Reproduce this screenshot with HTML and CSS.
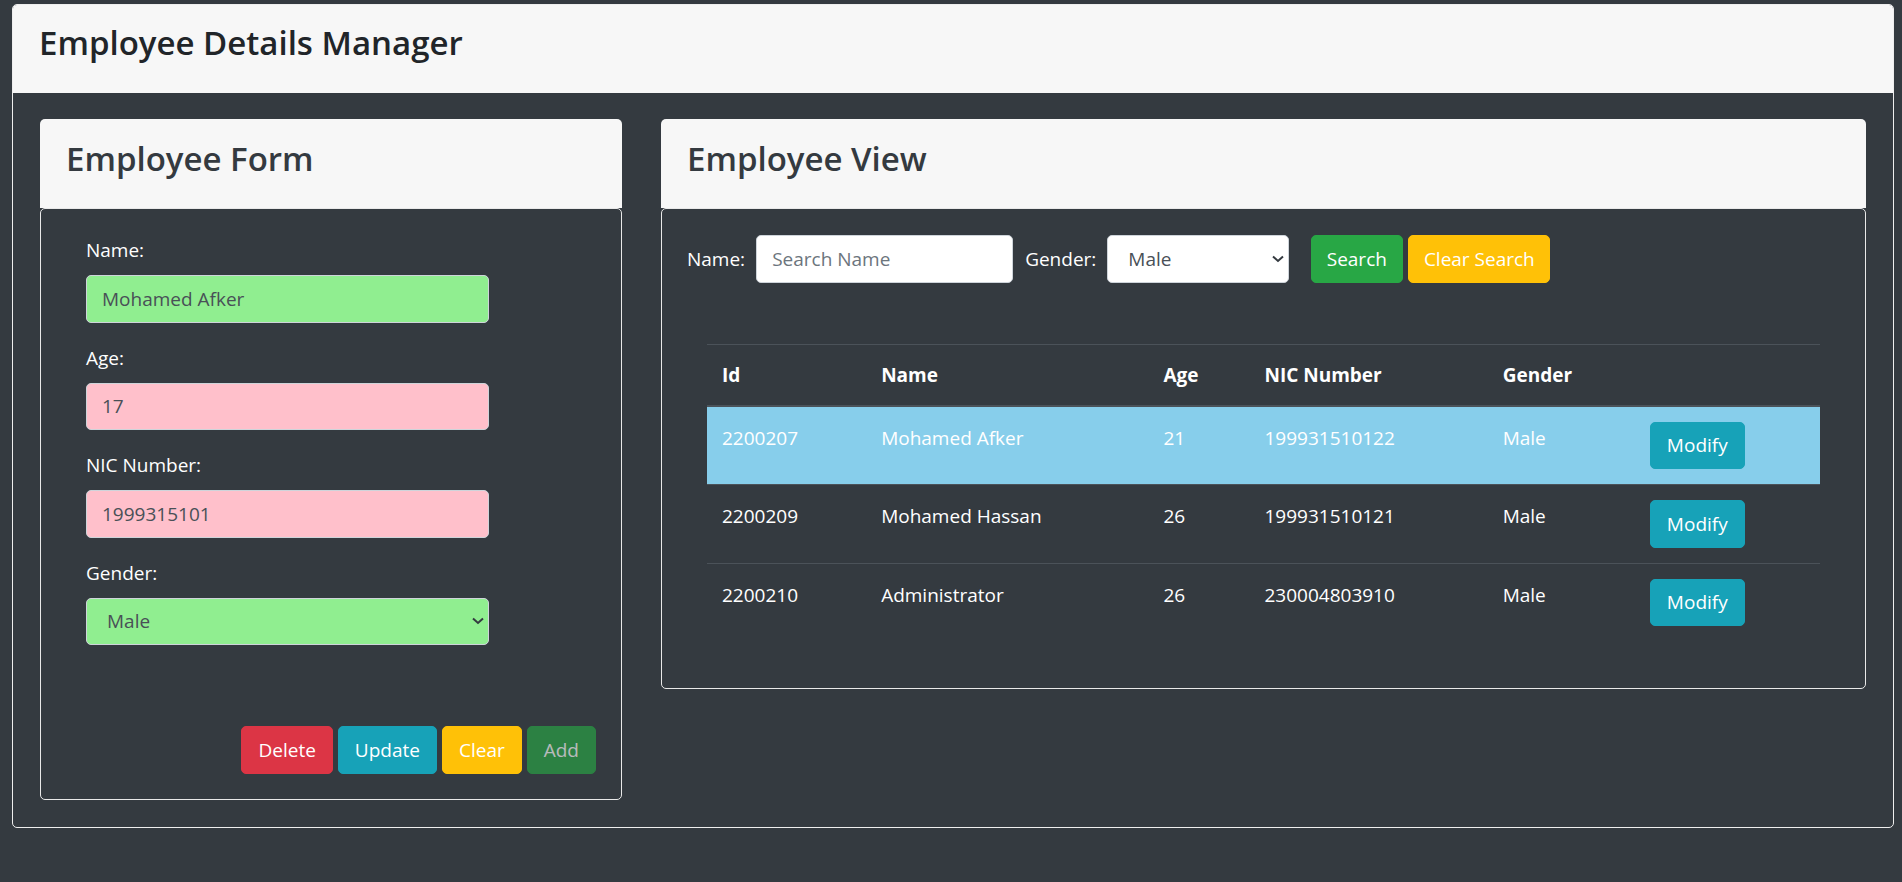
FILE: index.html
```html
<!DOCTYPE html>
<html lang="en">
<head>
<meta charset="utf-8">
<title>Employee Details Manager</title>
<link rel="stylesheet" href="styles.css">
</head>
<body>
<div class="shell">
  <header class="shell-header">
    <h1 class="shell-title">Employee Details Manager</h1>
  </header>
  <div class="shell-body">
    <section class="card">
      <div class="card-header"><h2 class="card-title">Employee Form</h2></div>
      <div class="card-body">
        <form class="emp-form">
          <div class="field">
            <label class="field-label">Name:</label>
            <input class="input input-ok" type="text" value="Mohamed Afker">
          </div>
          <div class="field">
            <label class="field-label">Age:</label>
            <input class="input input-bad" type="text" value="17">
          </div>
          <div class="field">
            <label class="field-label">NIC Number:</label>
            <input class="input input-bad" type="text" value="1999315101">
          </div>
          <div class="field">
            <label class="field-label">Gender:</label>
            <div class="select-wrap">
              <select class="input select input-ok"><option>Male</option><option>Female</option></select>
              <svg class="chev" width="12" height="8" viewBox="0 0 12 8"><path d="M1 1.5 L6 6 L11 1.5" fill="none" stroke="#343a40" stroke-width="2"/></svg>
            </div>
          </div>
          <div class="actions">
            <button type="button" class="btn btn-form btn-danger">Delete</button>
            <button type="button" class="btn btn-form btn-info">Update</button>
            <button type="button" class="btn btn-form btn-warning">Clear</button>
            <button type="button" class="btn btn-form btn-success btn-disabled">Add</button>
          </div>
        </form>
      </div>
    </section>

    <section class="card">
      <div class="card-header"><h2 class="card-title">Employee View</h2></div>
      <div class="card-body">
        <div class="search-bar">
          <label class="search-label">Name:</label>
          <input class="input search-input" type="text" placeholder="Search Name">
          <label class="search-label gender-label">Gender:</label>
          <div class="select-wrap search-select-wrap">
            <select class="input select"><option>Male</option><option>Female</option></select>
            <svg class="chev" width="12" height="8" viewBox="0 0 12 8"><path d="M1 1.5 L6 6 L11 1.5" fill="none" stroke="#343a40" stroke-width="2"/></svg>
          </div>
          <button type="button" class="btn btn-success btn-search">Search</button>
          <button type="button" class="btn btn-warning btn-clear-search">Clear Search</button>
        </div>

        <table class="emp-table">
          <colgroup>
            <col class="c-id"><col class="c-name"><col class="c-age"><col class="c-nic"><col class="c-gender"><col class="c-act">
          </colgroup>
          <thead>
            <tr><th>Id</th><th>Name</th><th>Age</th><th>NIC Number</th><th>Gender</th><th></th></tr>
          </thead>
          <tbody>
            <tr class="selected">
              <td>2200207</td><td>Mohamed Afker</td><td>21</td><td>199931510122</td><td>Male</td>
              <td><button type="button" class="btn btn-info btn-modify">Modify</button></td>
            </tr>
            <tr>
              <td>2200209</td><td>Mohamed Hassan</td><td>26</td><td>199931510121</td><td>Male</td>
              <td><button type="button" class="btn btn-info btn-modify">Modify</button></td>
            </tr>
            <tr>
              <td>2200210</td><td>Administrator</td><td>26</td><td>230004803910</td><td>Male</td>
              <td><button type="button" class="btn btn-info btn-modify">Modify</button></td>
            </tr>
          </tbody>
        </table>
      </div>
    </section>
  </div>
</div>
</body>
</html>
```

FILE: styles.css
```css
* { box-sizing: border-box; }

body {
  margin: 0;
  background: #343a40;
  font-family: "Open Sans", "Noto Sans", sans-serif;
  font-size: 19px;
  line-height: 30px;
  color: #fff;
}

.shell {
  margin: 4px 8px 0 12px;
  border: 1px solid #eeeeee;
  border-radius: 5px;
  overflow: hidden;
}

.shell-header {
  height: 88px;
  background: #f7f7f7;
  padding: 17px 26px 0;
}

.shell-title {
  margin: 0;
  font-size: 33px;
  line-height: 42px;
  font-weight: 600;
  color: #212529;
}

.shell-body {
  display: grid;
  grid-template-columns: 582px 1fr;
  column-gap: 39px;
  align-items: start;
  padding: 26px 27px 27px;
}

.card-header {
  height: 89px;
  background: #f7f7f7;
  border-radius: 5px 5px 0 0;
  padding: 19px 26px 0;
}

.card-title {
  margin: 0;
  font-size: 33px;
  line-height: 42px;
  font-weight: 600;
  color: #343a40;
}

.card-body {
  border: 1px solid #e9e9e9;
  border-radius: 5px;
  padding: 26px 25px 25px;
}

/* form */
.emp-form { padding-left: 20px; }

.field { width: 403px; margin-bottom: 20px; }

.field-label {
  display: block;
  margin-bottom: 10px;
}

.input {
  display: block;
  width: 100%;
  height: 47.5px;
  padding: 0 15px;
  font: inherit;
  color: #495057;
  background: #fff;
  border: 1px solid #ced4da;
  border-radius: 5px;
  outline: none;
}

.input::placeholder { color: #6c757d; }

.input-ok { background: #90ee90; }
.input-bad { background: #ffc0cb; }

.select {
  appearance: none;
  -webkit-appearance: none;
  padding-left: 20px;
}

.select-wrap { position: relative; }

.chev {
  position: absolute;
  right: 5px;
  top: 50%;
  margin-top: -4px;
  pointer-events: none;
}

.actions {
  display: flex;
  justify-content: flex-end;
  gap: 5px;
  padding-top: 61px;
}

/* buttons */
.btn {
  display: inline-flex;
  align-items: center;
  justify-content: center;
  height: 47.5px;
  padding: 0 14px;
  font: inherit;
  white-space: nowrap;
  color: #fff;
  border: 1px solid transparent;
  border-radius: 5px;
  cursor: pointer;
}

.btn-form { padding: 0 16px; }

.btn-danger { background: #dc3545; border-color: #dc3545; }
.btn-info { background: #17a2b8; border-color: #17a2b8; }
.btn-warning { background: #ffc107; border-color: #ffc107; }
.btn-success { background: #28a745; border-color: #28a745; }
.btn-disabled { opacity: .65; }

/* search */
.search-bar {
  display: flex;
  align-items: center;
}

.search-label { margin-right: 11px; }
.gender-label { margin-left: 12px; }

.search-input { width: 257px; }
.search-select-wrap { width: 182px; }

.btn-search { margin-left: 21.5px; min-width: 92px; }
.btn-clear-search { margin-left: 5.5px; min-width: 142px; }

/* table */
.emp-table {
  width: calc(100% - 40px);
  margin: 61px 20px 22px;
  border-collapse: collapse;
  table-layout: fixed;
}

.c-id { width: 159px; }
.c-name { width: 282px; }
.c-age { width: 101px; }
.c-nic { width: 238px; }
.c-gender { width: 147px; }
.c-act { width: 185px; }

.emp-table th,
.emp-table td {
  padding: 15px;
  text-align: left;
  vertical-align: top;
  border-top: 1px solid #4b5259;
}

.emp-table td { padding-top: 16px; }

.emp-table thead th {
  font-weight: 700;
  border-bottom: 2px solid #4b5259;
}

.emp-table tr.selected td { background: #87ceeb; }

.emp-table td .btn-modify { display: flex; width: 95px; margin-top: -1px; }
```
